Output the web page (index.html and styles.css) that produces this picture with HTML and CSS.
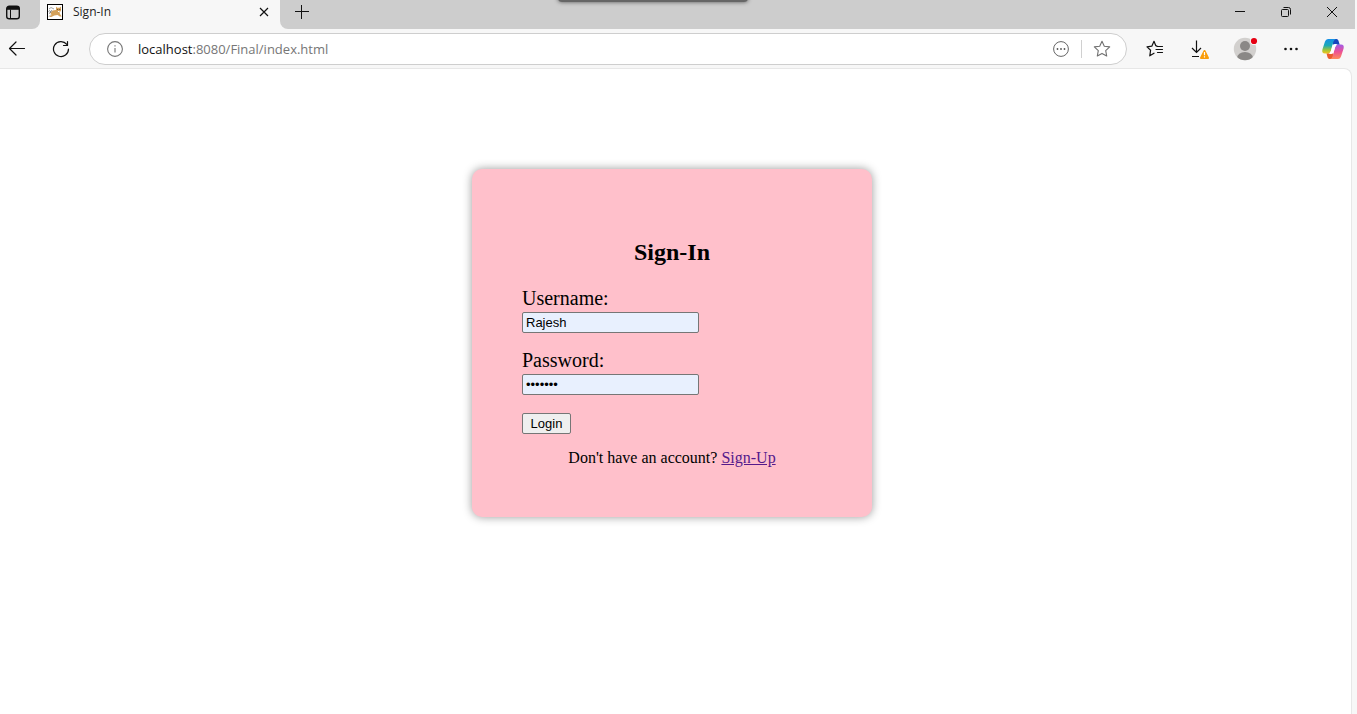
FILE: index.html
```html
<!DOCTYPE html>
<html lang="en">
<head>
<meta charset="utf-8">
<title>Sign-In</title>
<link rel="stylesheet" href="styles.css">
</head>
<body>
<header class="browser">
  <div class="tab-strip">
    <button class="tab-menu" aria-label="Tab actions">
      <svg width="16" height="16" viewBox="0 0 16 16" fill="none" stroke="#111"><rect x="1.700" y="1.200" width="12.600" height="12.600" rx="2.600" stroke-width="1.400"/><path d="M2 3.300h12" stroke-width="3"/><path d="M5.500 4.500v9" stroke-width="1"/></svg>
    </button>
    <div class="tab">
      <svg width="16" height="16" viewBox="0 0 16 16"><rect x=".5" y=".5" width="15" height="15" fill="#fff" stroke="#000"/><path d="M2 5l2-1.500L7 5M1.500 8L3 6M2 12.500l2-2" stroke="#999" fill="none" stroke-width=".9"/><path d="M9 2.500l1.200 1.200h2.300L14 2.500v4.300l-1.500 1.700.5 1.500 1.800 2.500h-2L10.500 11l-3.200.5-3 1.500H2l2.500-2L3.500 9l2-2.500L9 6z" fill="#d4a15a"/><path d="M10.200 5.500h1M12.300 5.500h1" stroke="#5d4320"/><path d="M11 7.500h1.500" stroke="#fff"/><path d="M2.500 9.500l2-3" stroke="#555" fill="none"/></svg>
      <span class="tab-title">Sign-In</span>
      <button class="tab-close" aria-label="Close tab">
        <svg width="10" height="10" viewBox="0 0 10 10" stroke="#111" stroke-width="1.2"><path d="M1 1l8 8M9 1L1 9"/></svg>
      </button>
    </div>
    <button class="new-tab" aria-label="New tab">
      <svg width="14" height="14" viewBox="0 0 14 14" stroke="#111"><path d="M0 6.500h14M6.500 0v14"/></svg>
    </button>
    <div class="window-controls">
      <button class="window-button" aria-label="Minimize"><svg width="10" height="10" viewBox="0 0 10 10" stroke="#111"><path d="M0 4.500h10"/></svg></button>
      <button class="window-button" aria-label="Restore"><svg width="10" height="10" viewBox="0 0 10 10" fill="none" stroke="#111"><rect x=".5" y="2.500" width="7" height="7" rx="1"/><path d="M2.500 .5h5a2 2 0 0 1 2 2v5"/></svg></button>
      <button class="window-button" aria-label="Close"><svg width="10" height="10" viewBox="0 0 10 10" stroke="#111"><path d="M0 0l10 10M10 0L0 10"/></svg></button>
    </div>
    <div class="screen-handle"></div>
  </div>
  <div class="toolbar">
    <button class="nav-button" aria-label="Back"><svg width="18" height="18" viewBox="0 0 18 18" fill="none" stroke="#111" stroke-width="1.200" stroke-linecap="round" stroke-linejoin="round"><path d="M16.500 8.500h-15M8 2L1.500 8.500 8 15"/></svg></button>
    <button class="nav-button" aria-label="Refresh"><svg width="18" height="18" viewBox="0 0 18 18" fill="none" stroke="#111" stroke-width="1.200" stroke-linecap="round" stroke-linejoin="round"><path d="M16.500 9A7.500 7.500 0 1 1 14.800 4.300M15.500 1.500v4h-4"/></svg></button>
    <div class="address-bar">
      <svg width="16" height="16" viewBox="0 0 16 16" fill="none" stroke="#767676" stroke-width="1.100"><circle cx="8" cy="8" r="7.400"/><path d="M8 7v4.500M8 4.300v1.300"/></svg>
      <div class="url"><span class="host">localhost</span>:8080/Final/index.html</div>
      <button class="address-button" aria-label="More page actions"><svg width="16" height="16" viewBox="0 0 16 16"><circle cx="8" cy="8" r="7.400" fill="none" stroke="#666"/><g fill="#555"><circle cx="4.500" cy="8" r=".9"/><circle cx="8" cy="8" r=".9"/><circle cx="11.500" cy="8" r=".9"/></g></svg></button>
      <span class="divider"></span>
      <button class="address-button" aria-label="Add to favorites"><svg width="18" height="18" viewBox="0 0 18 18" fill="none" stroke="#707070" stroke-width="1.100" stroke-linejoin="round"><path d="M9 1.300l2.300 4.900 5.400.7-4 3.700 1 5.400L9 13.400 4.300 16l1-5.400-4-3.700 5.400-.7z"/></svg></button>
    </div>
    <div class="tools">
      <button class="tool" aria-label="Favorites"><svg width="18" height="18" viewBox="0 0 18 18" fill="none" stroke="#111" stroke-width="1.200" stroke-linejoin="round" stroke-linecap="round"><path d="M11 6L9.800 5.700 8 1.300 5.800 6.200l-4.800.7L4.600 10.200l-.8 5.600L8 13.200M11 6.500h5.500M10 9.500h6.500M11.500 12.500h5"/></svg></button>
      <button class="tool" aria-label="Downloads"><svg width="20" height="20" viewBox="0 0 20 20" fill="none" stroke="#111" stroke-width="1.200"><path d="M6.500 1.500v12M2 9l4.500 4.500L11 9M2 17.500h7"/><path d="M14.500 12l3.500 7h-7z" fill="#fa9d0a" stroke="#fa9d0a" stroke-width="2" stroke-linejoin="round"/><path d="M14.500 13v3.300M14.500 17.300v1.200" stroke="#fff"/></svg></button>
      <button class="tool" aria-label="Profile"><svg width="26" height="26" viewBox="0 0 26 26"><defs><clipPath id="face"><circle cx="13" cy="13" r="11.200"/></clipPath></defs><circle cx="13" cy="13" r="11.200" fill="#d2d0ce"/><g fill="#8a8886" clip-path="url(#face)"><circle cx="13" cy="10" r="5"/><ellipse cx="13" cy="22" rx="8" ry="6"/></g><circle cx="22" cy="5" r="4" fill="#f7f7f7"/><circle cx="22" cy="5" r="3.100" fill="#e60012"/></svg></button>
      <button class="tool" aria-label="Settings and more"><svg width="16" height="4" viewBox="0 0 16 4" fill="#111"><circle cx="3.500" cy="2" r="1.300"/><circle cx="9" cy="2" r="1.300"/><circle cx="14.500" cy="2" r="1.300"/></svg></button>
      <button class="copilot" aria-label="Copilot"><svg width="24" height="22" viewBox="0 0 24 22"><defs><linearGradient id="cool" x2="0" y2="1"><stop offset="0" stop-color="#168fe8"/><stop offset=".45" stop-color="#1caab5"/><stop offset=".75" stop-color="#9bc43b"/><stop offset="1" stop-color="#f4c51c"/></linearGradient><linearGradient id="warm" x2="0" y2="1"><stop offset="0" stop-color="#a25be8"/><stop offset=".5" stop-color="#ed5194"/><stop offset="1" stop-color="#ff8c5b"/></linearGradient></defs><path d="M11 1h4.500q1.500 0 2 1.700l1.200 4h-3.500q-2 0-2.600 2z" fill="#1747bd"/><path d="M13 21H8.500Q7 21 6.500 19.300l-1-4H9q1.700 0 2.400-2z" fill="#e95a2c"/><path d="M7 1h8q-1.800.5-2.500 2.500L9.800 13Q9 15.500 6.500 15.500H4q-3.500 0-2.600-4L4 3.500Q4.800 1 7 1z" fill="url(#cool)"/><path d="M17 21H9q1.800-.5 2.500-2.500L14.200 9q.7-2.500 3.300-2.500H20q3.500 0 2.600 4L20 18.500Q19.200 21 17 21z" fill="url(#warm)"/><path d="M11.500 7.500q.6-1.500 2.200-1.500h3q-1.800.6-2.500 3l-1.600 5.200q-.6 1.800-2.200 1.800H7.500q1.700-.6 2.300-2.500z" fill="#fff"/></svg></button>
    </div>
  </div>
</header>
<div class="page-frame">
  <main class="page">
    <section class="card">
      <h2>Sign-In</h2>
      <form>
        <div class="field"><label for="username">Username:</label><input id="username" type="text" value="Rajesh"></div>
        <div class="field"><label for="password">Password:</label><input id="password" type="password" value="rajesh1"></div>
        <button class="login" type="button">Login</button>
      </form>
      <p>Don't have an account? <a href="#signup">Sign-Up</a></p>
    </section>
  </main>
</div>
</body>
</html>
```
FILE: styles.css
```css
* { box-sizing: border-box; }
body {
  margin: 0;
  min-height: 100vh;
  display: flex;
  flex-direction: column;
  background: #f7f7f7;
  color: #000;
  font-family: "Liberation Serif", serif;
}
svg { display: block; flex: none; }
.browser { font-family: "Open Sans", sans-serif; }
.browser button {
  display: flex;
  align-items: center;
  justify-content: center;
  flex: none;
  border: 0;
  padding: 0;
  background: transparent;
}
.tab-strip {
  position: relative;
  display: flex;
  height: 29px;
  padding-right: 2px;
  overflow: hidden;
  background: linear-gradient(to left, #f7f7f7 2px, #cdcdcd 2px);
}
.browser .tab-menu {
  width: 40px;
  height: 29px;
  padding: 0 14px 4px 0;
  border-radius: 0 0 8px 0;
  background: #cdcdcd;
}
.tab {
  display: flex;
  align-items: center;
  width: 240px;
  padding: 0 10px 5px 7px;
  background: #f7f7f7;
  box-shadow: -8px 0 #f7f7f7, 8px 0 #f7f7f7;
}
.tab-menu, .new-tab { position: relative; }
.tab-title { flex: 1; margin-left: 10px; font-size: 12px; line-height: 16px; color: #222; }
.browser .tab-close { width: 12px; height: 16px; }
.browser .new-tab {
  width: 44px;
  height: 29px;
  padding-bottom: 5px;
  border-radius: 0 0 0 8px;
  background: #cdcdcd;
}
.window-controls { display: flex; margin-left: auto; }
.browser .window-button { width: 46px; height: 24px; }
.screen-handle {
  position: absolute;
  top: -8px;
  left: calc(50% - 121px);
  width: 190px;
  height: 10px;
  border-radius: 4px;
  background: #666;
  box-shadow: 0 0 4px #555;
}
.toolbar {
  display: flex;
  align-items: center;
  height: 39px;
  padding-right: 3px;
  background: #f7f7f7;
}
.browser .nav-button { width: 34px; height: 32px; }
.nav-button + .nav-button { margin-left: 10px; }
.address-bar {
  display: flex;
  align-items: center;
  flex: 1;
  height: 32px;
  margin: 1px 5px 0 11px;
  padding: 0 12px 0 17px;
  border: 1px solid #cecece;
  border-radius: 16px;
  background: #fff;
}
.url { flex: 1; margin-left: 15px; font-size: 13px; line-height: 18px; color: #767676; }
.host { color: #111; }
.browser .address-button { width: 24px; height: 24px; }
.divider { width: 1px; height: 18px; margin: 0 8px; background: #d0d0d0; }
.tools { display: flex; align-items: center; }
.browser .tool { width: 45px; height: 32px; }
.browser .copilot { width: 42px; height: 32px; }
.page-frame { display: flex; flex: 1; padding-right: 5px; }
.page {
  flex: 1;
  padding: 100px 7px 0 0;
  border-top: 1px solid #e7e7e7;
  border-right: 1px solid #e7e7e7;
  border-radius: 0 8px 0 0;
  background: #fff;
}
.card {
  max-width: 400px;
  margin: 0 auto;
  padding: 50px;
  border-radius: 10px;
  background: #ffc0cb;
  box-shadow: 0 0 10px rgba(0, 0, 0, 0.4);
}
.card h2 { margin: 20px 0; font-size: 24px; line-height: 27px; text-align: center; }
.field { display: flex; flex-direction: column; align-items: flex-start; gap: 2px; margin-bottom: 15px; }
.field label { font-size: 20px; line-height: 24px; }
.field input {
  width: 177px;
  height: 21px;
  padding: 1px 3px;
  border: 1px solid #767676;
  border-radius: 2px;
  background: #e8f0fe;
  color: #000;
  font-family: "Liberation Sans", sans-serif;
  font-size: 13px;
}
.login {
  display: block;
  width: 49px;
  height: 21px;
  padding: 0;
  border: 1px solid #767676;
  border-radius: 2px;
  background: #efefef;
  color: #000;
  font-family: "Liberation Sans", sans-serif;
  font-size: 13px;
}
.field + .login { margin-top: 18px; }
.card p { margin: 15px 0 0; font-size: 16px; line-height: 18px; text-align: center; }
.card a { color: #551a8b; }
```
